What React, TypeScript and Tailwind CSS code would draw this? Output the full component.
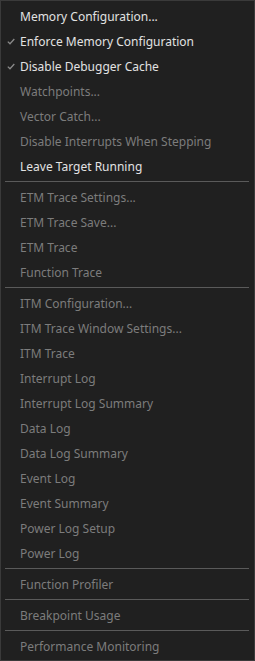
import React from "react";

type Item = { label: string; enabled?: boolean; checked?: boolean } | "sep";

const items: Item[] = [
  { label: "Memory Configuration...", enabled: true },
  { label: "Enforce Memory Configuration", enabled: true, checked: true },
  { label: "Disable Debugger Cache", enabled: true, checked: true },
  { label: "Watchpoints..." },
  { label: "Vector Catch..." },
  { label: "Disable Interrupts When Stepping" },
  { label: "Leave Target Running", enabled: true },
  "sep",
  { label: "ETM Trace Settings..." },
  { label: "ETM Trace Save..." },
  { label: "ETM Trace" },
  { label: "Function Trace" },
  "sep",
  { label: "ITM Configuration..." },
  { label: "ITM Trace Window Settings..." },
  { label: "ITM Trace" },
  { label: "Interrupt Log" },
  { label: "Interrupt Log Summary" },
  { label: "Data Log" },
  { label: "Data Log Summary" },
  { label: "Event Log" },
  { label: "Event Summary" },
  { label: "Power Log Setup" },
  { label: "Power Log" },
  "sep",
  { label: "Function Profiler" },
  "sep",
  { label: "Breakpoint Usage" },
  "sep",
  { label: "Performance Monitoring" },
];

function Check() {
  return (
    <svg width="8" height="7" viewBox="0 0 8 7" className="block">
      <path d="M0.8 3.6 L3 5.8 L7.3 1" fill="none" stroke="#8a8a8a" strokeWidth="1.3" />
    </svg>
  );
}

export default function App() {
  return (
    <div
      className="w-[255px] h-[661px] bg-[#202020] border border-[#3a3a3a] pt-[3px] pb-[1px] flex flex-col"
      style={{ fontFamily: '"Noto Sans", "Open Sans", sans-serif' }}
    >
      {items.map((it, i) =>
        it === "sep" ? (
          <div key={i} className="h-[6px] pt-[2px] pl-[4px] pr-[5px] shrink-0">
            <div className="h-px w-full bg-[#5a5a5a]" />
          </div>
        ) : (
          <div key={i} className="h-[25px] flex items-center shrink-0">
            <div className="w-[19px] flex justify-center pl-[1px]">
              {it.checked ? <Check /> : null}
            </div>
            <span
              className={
                "text-[12px] leading-none whitespace-nowrap " +
                (it.enabled ? "text-[#e2e2e2]" : "text-[#7c7c7c]")
              }
            >
              {it.label}
            </span>
          </div>
        )
      )}
    </div>
  );
}
